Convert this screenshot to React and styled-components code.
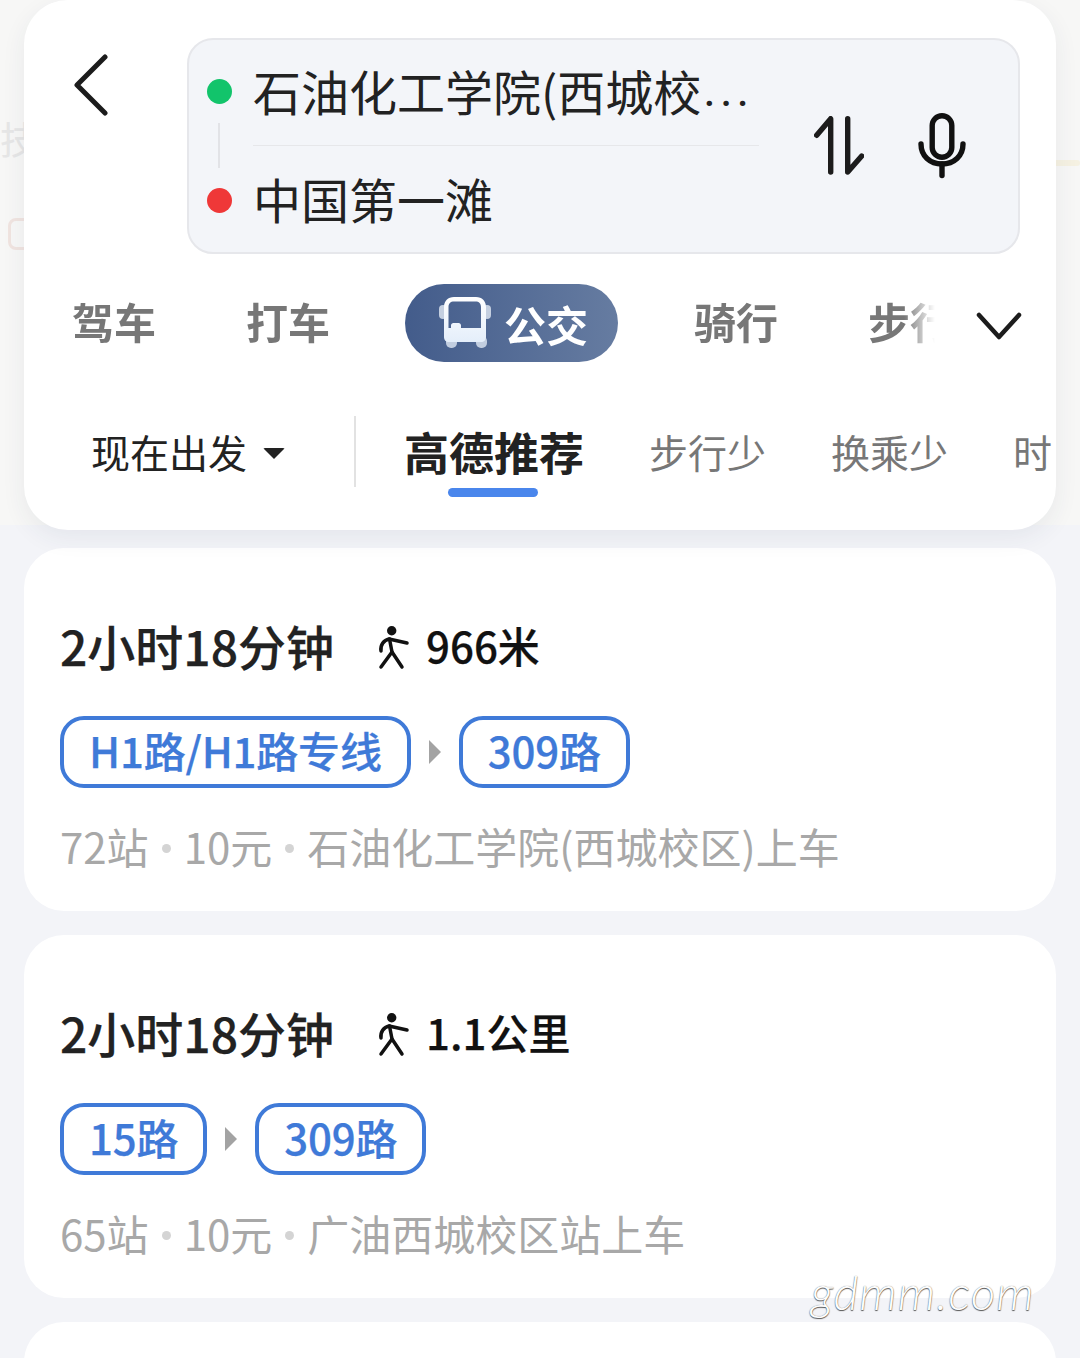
import styled, { createGlobalStyle } from 'styled-components'

const GlobalStyle = createGlobalStyle`
  html, body {
    margin: 0;
    padding: 0;
    background: #f3f4f8;
  }
  * {
    box-sizing: border-box;
  }
  body {
    font-family: "Noto Sans CJK SC", "Noto Sans", sans-serif;
  }
`

const Page = styled.div`
  position: relative;
  width: 1080px;
  height: 1358px;
  overflow: hidden;
  background: #f3f4f8;
`

const MapBackdrop = styled.div`
  position: absolute;
  top: 0;
  left: 0;
  right: 0;
  height: 525px;
  background: #f7f7f6;
  color: #e6e6e6;
  font-size: 38px;
  line-height: 276px;
`

const MapPin = styled.span`
  position: absolute;
  left: 8px;
  top: 218px;
  width: 30px;
  height: 32px;
  border: 3px solid #f0e4e0;
  border-radius: 8px;
`

const MapRoad = styled.span`
  position: absolute;
  right: 0;
  top: 160px;
  width: 30px;
  height: 6px;
  border-radius: 3px;
  background: #f5f1e2;
`

const Header = styled.header`
  position: relative;
  margin: 0 24px;
  height: 530px;
  padding-top: 38px;
  background: #fff;
  border-radius: 44px;
  box-shadow: 0 8px 24px rgba(40, 50, 80, 0.07);
`

const SearchRow = styled.div`
  display: flex;
  align-items: flex-start;
  padding-right: 36px;
`

const BackButton = styled.div`
  width: 163px;
  padding: 16px 0 0 50px;
  line-height: 0;
`

const SearchBox = styled.div`
  flex: 1;
  height: 216px;
  display: flex;
  background: #f3f5f9;
  border: 2px solid #e6e7eb;
  border-radius: 26px;
`

const Stops = styled.div`
  position: relative;
  width: 570px;
  padding-left: 18px;
  &::before {
    content: '';
    position: absolute;
    left: 29px;
    top: 83px;
    width: 2px;
    height: 45px;
    background: #e2e3e7;
  }
`

const Stop = styled.div`
  height: 106px;
  display: flex;
  align-items: center;
  gap: 21px;
`

const Dot = styled.span`
  flex: none;
  width: 25px;
  height: 25px;
  margin: ${({ $lift }) => ($lift > 0 ? `0 0 ${$lift}px` : `${-$lift}px 0 0`)};
  border-radius: 50%;
  background: ${({ $color }) => $color};
`

const StopName = styled.div`
  width: 506px;
  height: 100%;
  padding-bottom: ${({ $line }) => ($line ? '6px' : '2px')};
  display: flex;
  align-items: center;
  font-size: 48px;
  color: #222;
  white-space: nowrap;
  border-bottom: ${({ $line }) => ($line ? '1px solid #e6e7ea' : 'none')};
`

const Dots = styled.span`
  font-family: "Roboto", sans-serif;
  letter-spacing: 4px;
  margin-left: 2px;
`

const Actions = styled.div`
  flex: 1;
  display: flex;
  align-items: center;
  gap: 52px;
  padding: 0 0 2px 55px;
`

const ModeRow = styled.div`
  display: flex;
  align-items: center;
  margin-top: 30px;
  height: 78px;
`

const ModeScroller = styled.div`
  width: 911px;
  display: flex;
  align-items: center;
  gap: 90px;
  padding-left: 48px;
  overflow: hidden;
  mask-image: linear-gradient(to right, #000 880px, transparent 911px);
`

const Mode = styled.div`
  flex: none;
  height: 78px;
  font-size: 42px;
  font-weight: 700;
  line-height: 74px;
  color: #777;
`

const ActiveMode = styled.div`
  flex: none;
  width: 213px;
  height: 78px;
  margin: 0 -14px 0 -15px;
  display: flex;
  align-items: center;
  gap: 13px;
  padding-left: 34px;
  border-radius: 39px;
  background: linear-gradient(90deg, #435c8b, #667ca1);
  color: #fff;
  font-size: 42px;
  font-weight: 700;
`

const Chevron = styled.div`
  margin: 6px 0 0 41px;
  line-height: 0;
`

const FilterRow = styled.div`
  display: flex;
  align-items: flex-start;
  margin-top: 54px;
  height: 81px;
  padding-left: 67px;
`

const Departure = styled.div`
  flex: none;
  width: 265px;
  height: 71px;
  padding-bottom: 2px;
  display: flex;
  align-items: center;
  gap: 16px;
  font-size: 39px;
  color: #222;
  border-right: 2px solid #e2e2e2;
`

const Caret = styled.span`
  width: 0;
  height: 0;
  margin-top: 5px;
  border-left: 11px solid transparent;
  border-right: 11px solid transparent;
  border-top: 11px solid #222;
  border-radius: 2px;
`

const FilterTabs = styled.div`
  flex: 1;
  min-width: 0;
  height: 81px;
  margin-right: 4px;
  padding-left: 48px;
  display: flex;
  align-items: flex-start;
  gap: 65px;
  overflow: hidden;
  white-space: nowrap;
`

const FilterTab = styled.div`
  position: relative;
  flex: none;
  height: 81px;
  line-height: 71px;
  font-size: ${({ $active }) => ($active ? '45px' : '39px')};
  font-weight: ${({ $active }) => ($active ? 700 : 400)};
  color: ${({ $active }) => ($active ? '#222' : '#777')};
  ${({ $active }) =>
    $active &&
    `
    &::after {
      content: '';
      position: absolute;
      left: 44px;
      bottom: 0;
      width: 90px;
      height: 9px;
      border-radius: 5px;
      background: #4a86ec;
    }
  `}
`

const RouteCard = styled.section`
  margin: ${({ $first }) => ($first ? '18px' : '24px')} 24px 0;
  height: 363px;
  padding: 70px 36px 0;
  background: #fff;
  border-radius: 40px;
`

const RouteHead = styled.div`
  height: 60px;
  display: flex;
  align-items: center;
`

const Duration = styled.div`
  width: 317px;
  padding-bottom: 7px;
  font-size: 48px;
  font-weight: 500;
  -webkit-text-stroke: 0.25px #222;
  color: #222;
  white-space: nowrap;
`

const Walk = styled.div`
  display: flex;
  align-items: center;
  gap: 16px;
`

const WalkText = styled.span`
  padding-bottom: 8px;
  font-size: 42px;
  font-weight: 500;
  -webkit-text-stroke: 0.25px #111;
  color: #111;
`

const Lines = styled.div`
  margin-top: 38px;
  display: flex;
  align-items: center;
  gap: 18px;
`

const LinePill = styled.div`
  height: 72px;
  padding: 0 25px 6px;
  display: flex;
  align-items: center;
  border: 4px solid #3f7ad8;
  border-radius: 24px;
  font-size: 42px;
  font-weight: 500;
  letter-spacing: -0.2px;
  -webkit-text-stroke: 0.25px #3f7ad8;
  color: #3f7ad8;
  white-space: nowrap;
`

const LineArrow = styled.span`
  width: 0;
  height: 0;
  border-top: 12px solid transparent;
  border-bottom: 12px solid transparent;
  border-left: 12px solid #a3a3a3;
`

const RouteInfo = styled.div`
  margin-top: 36px;
  height: 48px;
  padding-bottom: 6px;
  display: flex;
  align-items: center;
  gap: 13px;
  font-size: 42px;
  color: #a8a8a8;
  white-space: nowrap;
`

const InfoDot = styled.span`
  width: 9px;
  height: 9px;
  margin-top: 6px;
  border-radius: 50%;
  background: #d4d4d4;
`

const Watermark = styled.div`
  position: absolute;
  left: 811px;
  top: 1262px;
  font-family: "Lato", sans-serif;
  font-size: 48px;
  font-weight: 300;
  font-style: italic;
  line-height: 60px;
  letter-spacing: 1px;
  color: #fdfdfd;
  text-shadow: 0 1px 1px #555, 0 0 1px #777;
`

const BackIcon = () => (
  <svg width="36" height="62" viewBox="0 0 36 62" fill="none" stroke="#1c1c1c" strokeWidth="5" strokeLinecap="round" strokeLinejoin="round">
    <path d="M31 3 3 31l28 28" />
  </svg>
)

const SwapIcon = () => (
  <svg width="50" height="59" viewBox="0 0 50 59" fill="none" stroke="#1c1c1c" strokeWidth="5.4" strokeLinecap="round" strokeLinejoin="round">
    <path d="M2.7 19.3 16.7 2.7V56" />
    <path d="M33.7 2.7V56l14-16" />
  </svg>
)

const MicIcon = () => (
  <svg width="52" height="67" viewBox="0 0 52 67" fill="none" stroke="#111" strokeWidth="5.4" strokeLinecap="round">
    <rect x="16.2" y="3.7" width="19.6" height="41.6" rx="9.8" />
    <path d="M5 32c0 12 9 20 21 20s21-8 21-20" />
    <path d="M26 52v11.5" />
  </svg>
)

const BusIcon = () => (
  <svg width="52" height="54" viewBox="0 0 52 54">
    <defs>
      <linearGradient id="busFill" x1="0" y1="0" x2="0" y2="1">
        <stop offset="0" stopColor="#ffffff" />
        <stop offset="1" stopColor="#e4eefa" />
      </linearGradient>
    </defs>
    <rect x="0" y="9" width="8" height="14" rx="4" fill="#c4cfe0" />
    <rect x="44" y="9" width="8" height="14" rx="4" fill="#c4cfe0" />
    <rect x="7" y="40" width="11" height="12" rx="5" fill="#c2cee0" />
    <rect x="37" y="40" width="11" height="12" rx="5" fill="#c2cee0" />
    <path
      fill="url(#busFill)"
      fillRule="evenodd"
      d="M15 1h22c6 0 10 4 10 10v30c0 3-2 5-5 5H10c-3 0-5-2-5-5V11C5 5 9 1 15 1Zm0 4.500c-3.500 0-5.500 2-5.500 5.500v21H12v-2.500c0-1.500 1-2.500 2.500-2.500h5c1.500 0 2.500 1 2.500 2.500V32h20V11c0-3.500-2-5.500-5.500-5.500H15Z"
    />
  </svg>
)

const ChevronIcon = () => (
  <svg width="46" height="28" viewBox="0 0 46 28" fill="none" stroke="#1c1c1c" strokeWidth="4.5" strokeLinecap="round" strokeLinejoin="round">
    <path d="M3 3 23 25 43 3" />
  </svg>
)

const WalkIcon = () => (
  <svg width="33" height="44" viewBox="0 0 33 44" fill="none" stroke="#111" strokeWidth="3.5" strokeLinecap="round" strokeLinejoin="round">
    <circle cx="14.700" cy="4.700" r="4.700" fill="#111" stroke="none" />
    <path d="M4 25c-1-6 3-11 8-12l18 4" />
    <path d="M12.500 13 15 26 4 41" />
    <path d="M15 26l10 15" />
  </svg>
)

const routes = [
  {
    time: '2小时18分钟',
    walk: '966米',
    lines: ['H1路/H1路专线', '309路'],
    stops: '72站',
    price: '10元',
    from: '石油化工学院(西城校区)上车',
  },
  {
    time: '2小时18分钟',
    walk: '1.1公里',
    lines: ['15路', '309路'],
    stops: '65站',
    price: '10元',
    from: '广油西城校区站上车',
  },
]

const App = () => (
  <Page>
    <GlobalStyle />
    <MapBackdrop>
      技
      <MapPin />
      <MapRoad />
    </MapBackdrop>
    <Header>
      <SearchRow>
        <BackButton>
          <BackIcon />
        </BackButton>
        <SearchBox>
          <Stops>
            <Stop>
              <Dot $color="#12c46b" $lift={4} />
              <StopName $line>
                石油化工学院(西城校<Dots>...</Dots>
              </StopName>
            </Stop>
            <Stop>
              <Dot $color="#ef3838" $lift={-2} />
              <StopName>中国第一滩</StopName>
            </Stop>
          </Stops>
          <Actions>
            <SwapIcon />
            <MicIcon />
          </Actions>
        </SearchBox>
      </SearchRow>
      <ModeRow>
        <ModeScroller>
          <Mode>驾车</Mode>
          <Mode>打车</Mode>
          <ActiveMode>
            <BusIcon />
            公交
          </ActiveMode>
          <Mode>骑行</Mode>
          <Mode>步行</Mode>
        </ModeScroller>
        <Chevron>
          <ChevronIcon />
        </Chevron>
      </ModeRow>
      <FilterRow>
        <Departure>
          现在出发
          <Caret />
        </Departure>
        <FilterTabs>
          <FilterTab $active>高德推荐</FilterTab>
          <FilterTab>步行少</FilterTab>
          <FilterTab>换乘少</FilterTab>
          <FilterTab>时间短</FilterTab>
        </FilterTabs>
      </FilterRow>
    </Header>
    {routes.map((route, i) => (
      <RouteCard key={route.stops} $first={i === 0}>
        <RouteHead>
          <Duration>{route.time}</Duration>
          <Walk>
            <WalkIcon />
            <WalkText>{route.walk}</WalkText>
          </Walk>
        </RouteHead>
        <Lines>
          <LinePill>{route.lines[0]}</LinePill>
          <LineArrow />
          <LinePill>{route.lines[1]}</LinePill>
        </Lines>
        <RouteInfo>
          {route.stops}
          <InfoDot />
          {route.price}
          <InfoDot />
          {route.from}
        </RouteInfo>
      </RouteCard>
    ))}
    <RouteCard />
    <Watermark>gdmm.com</Watermark>
  </Page>
)

export default App
